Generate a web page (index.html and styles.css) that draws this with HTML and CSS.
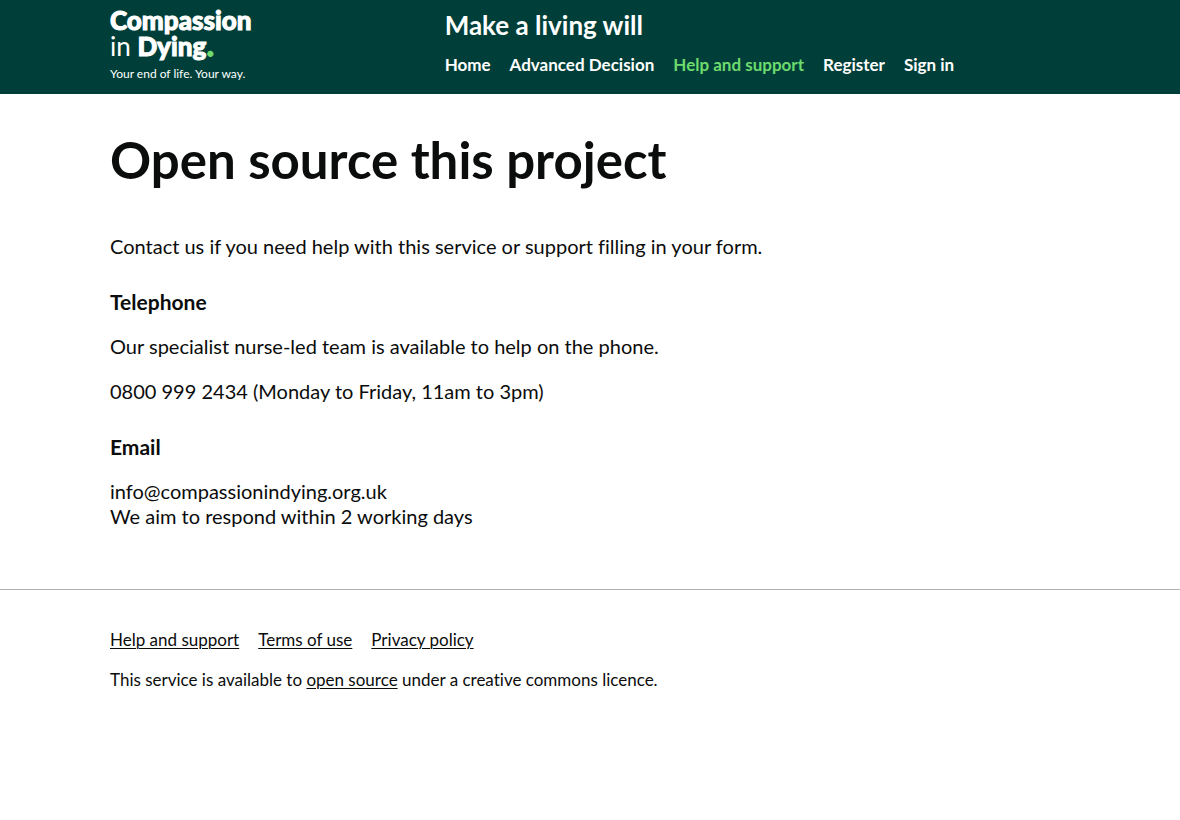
FILE: index.html
```html
<!DOCTYPE html>
<html lang="en">
<head>
<meta charset="utf-8">
<meta name="viewport" content="width=device-width, initial-scale=1">
<title>Open source this project - Make a living will</title>
<link rel="stylesheet" href="styles.css">
</head>
<body>
<header class="header">
  <div class="container header-inner">
    <a class="logo" href="#">
      <span class="logo-line logo-bold">Compassion</span>
      <span class="logo-line">in <b class="logo-bold">Dying<span class="logo-dot">.</span></b></span>
      <span class="logo-tagline">Your end of life. Your way.</span>
    </a>
    <div class="header-content">
      <a class="service-name" href="#">Make a living will</a>
      <nav class="nav" aria-label="Menu">
        <a href="#">Home</a>
        <a href="#">Advanced Decision</a>
        <a class="active" href="#" aria-current="page">Help and support</a>
        <a href="#">Register</a>
        <a href="#">Sign in</a>
      </nav>
    </div>
  </div>
</header>
<main class="container main">
  <h1>Open source this project</h1>
  <p>Contact us if you need help with this service or support filling in your form.</p>
  <h2>Telephone</h2>
  <p>Our specialist nurse-led team is available to help on the phone.</p>
  <p>0800 999 2434 (Monday to Friday, 11am to 3pm)</p>
  <h2>Email</h2>
  <p>info@compassionindying.org.uk<br>We aim to respond within 2 working days</p>
</main>
<footer class="footer">
  <div class="container">
    <nav class="footer-links" aria-label="Support links">
      <a href="#">Help and support</a>
      <a href="#">Terms of use</a>
      <a href="#">Privacy policy</a>
    </nav>
    <p class="licence">This service is available to <a href="#">open source</a> under a creative commons licence.</p>
  </div>
</footer>
</body>
</html>
```

FILE: styles.css
```css
* { box-sizing: border-box; }
body { margin: 0; background: #fff; color: #0b0c0c; font-family: Lato, sans-serif; font-size: 20px; line-height: 25px; font-variant-ligatures: none; }
.container { width: calc(100% - 40px); max-width: 960px; margin: 0 auto; }
.header { background: #003f39; color: #fff; }
.header a { color: inherit; text-decoration: none; }
.header-inner { display: grid; grid-template-columns: 1fr 2fr; gap: 22px; padding: 7px 0 5px; }
.logo { display: flex; flex-direction: column; }
.logo-line { font-size: 26px; line-height: 26px; }
.logo-bold { font-weight: 900; -webkit-text-stroke: 1px currentColor; }
.header .logo-dot { color: #6ddb6d; -webkit-text-stroke: 2px currentColor; margin-left: 1px; }
.logo-tagline { font-size: 12px; line-height: 30px; }
.header-content { display: flex; flex-direction: column; gap: 10px; padding-top: 3px; }
.service-name { font-size: 26px; line-height: 30px; font-weight: 700; }
.nav { display: flex; flex-wrap: wrap; gap: 0 19px; font-size: 17px; line-height: 30px; font-weight: 700; }
.header .active { color: #6ddb6d; }
.main { padding: 40px 0 60px; }
h1 { margin: 0 0 48px; font-size: 51px; line-height: 52px; font-weight: 700; }
h2 { margin: 30px 0 20px; font-size: 21px; line-height: 25px; font-weight: 700; }
p { margin: 0 0 20px; }
.main p:last-child { margin: 0; }
.footer { padding: 40px 0; border-top: 1px solid #b1b4b6; font-size: 17px; line-height: 20px; }
.footer a { color: inherit; text-decoration-thickness: 1px; text-underline-offset: 2px; }
.footer-links { display: flex; flex-wrap: wrap; gap: 0 19px; margin-bottom: 20px; }
.footer .licence { margin: 0; }
```
